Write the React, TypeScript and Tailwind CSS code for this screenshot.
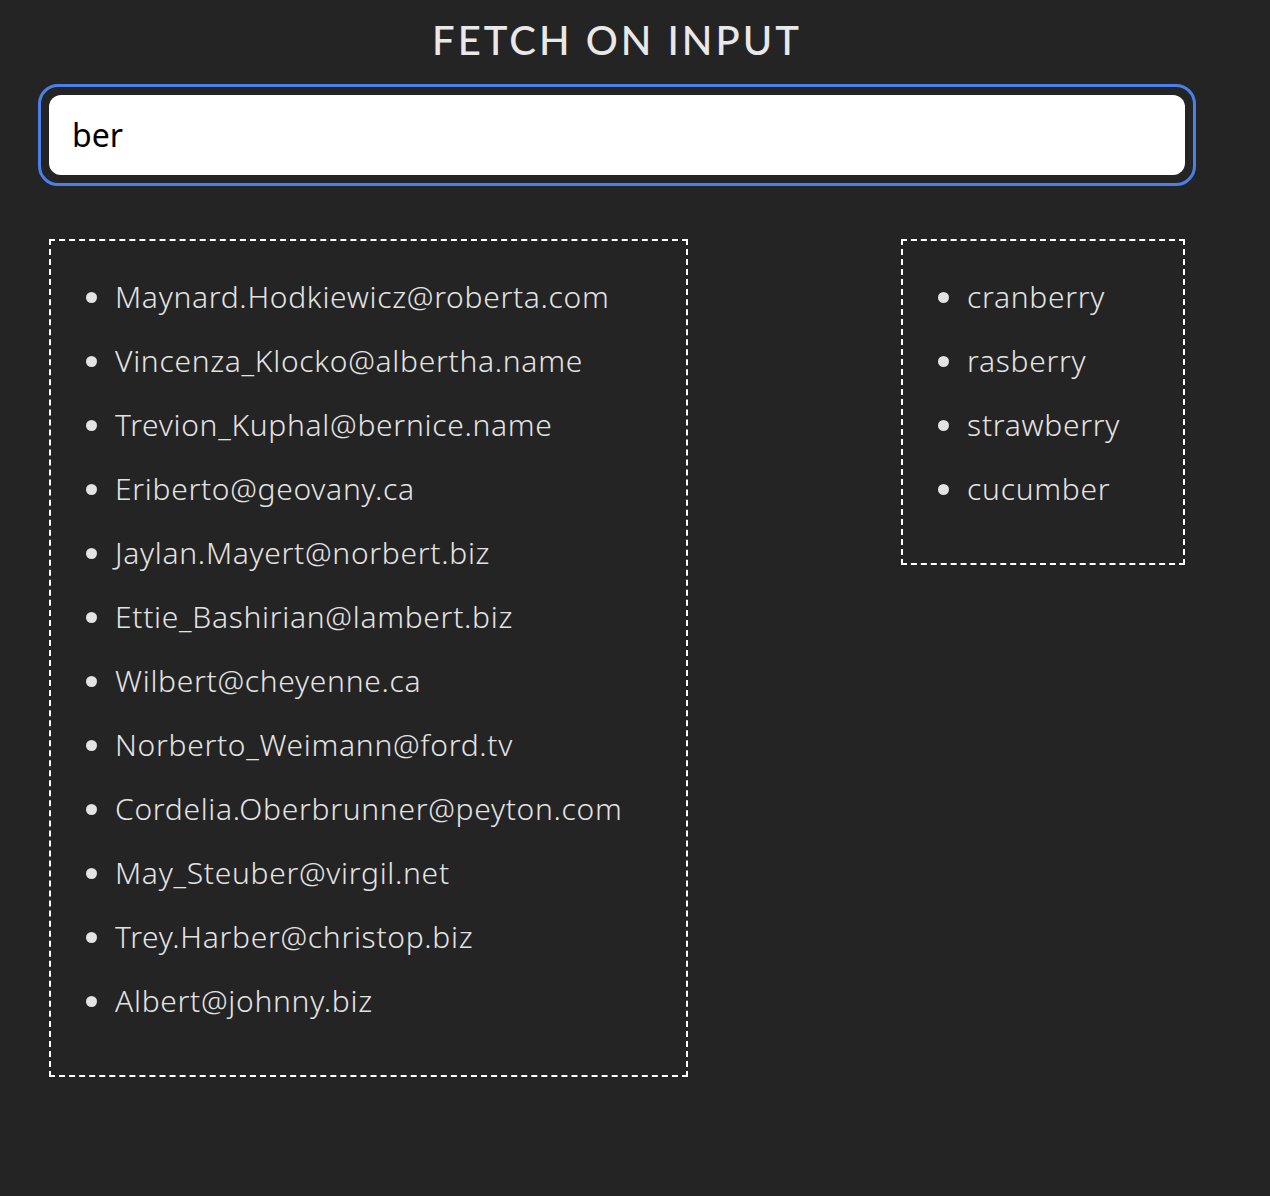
const EMAILS = [
  'Maynard.Hodkiewicz@roberta.com',
  'Vincenza_Klocko@albertha.name',
  'Trevion_Kuphal@bernice.name',
  'Eriberto@geovany.ca',
  'Jaylan.Mayert@norbert.biz',
  'Ettie_Bashirian@lambert.biz',
  'Wilbert@cheyenne.ca',
  'Norberto_Weimann@ford.tv',
  'Cordelia.Oberbrunner@peyton.com',
  'May_Steuber@virgil.net',
  'Trey.Harber@christop.biz',
  'Albert@johnny.biz',
]

const FRUITS = ['cranberry', 'rasberry', 'strawberry', 'cucumber']

function ResultList({ items }: { items: string[] }) {
  return (
    <div className="border-2 border-dashed border-white px-[63px] pt-[24px] pb-[42px]">
      <ul className="list-disc marker:text-[#e3e3e3]">
        {items.map((item) => (
          <li key={item} className="h-[64px] leading-[64px] pl-[1px] whitespace-nowrap">
            {item}
          </li>
        ))}
      </ul>
    </div>
  )
}

export default function App() {
  return (
    <div className="min-h-[1196px] bg-[#242424] text-[#e3e3e3] font-['Noto_Sans','Lato',sans-serif]">
      <div className="w-[1136px] ml-[49px] pt-[16px]">
        <h1 className="text-center font-['Lato','Noto_Sans',sans-serif] text-[40px] leading-[48px] font-medium tracking-[3px] text-[#e8e8e8]">
          FETCH ON INPUT
        </h1>

        <div className="mt-[20px] -mx-[11px] rounded-[20px] border-[3px] border-[#4a80ea] p-[8px]">
          <div className="h-[80px] rounded-[12px] bg-white flex items-center px-[23px] text-[32px] text-black">
            ber
          </div>
        </div>

        <div className="mt-[53px] flex items-start justify-between text-[30px] font-light tracking-[0.7px]">
          <ResultList items={EMAILS} />
          <ResultList items={FRUITS} />
        </div>
      </div>
    </div>
  )
}
